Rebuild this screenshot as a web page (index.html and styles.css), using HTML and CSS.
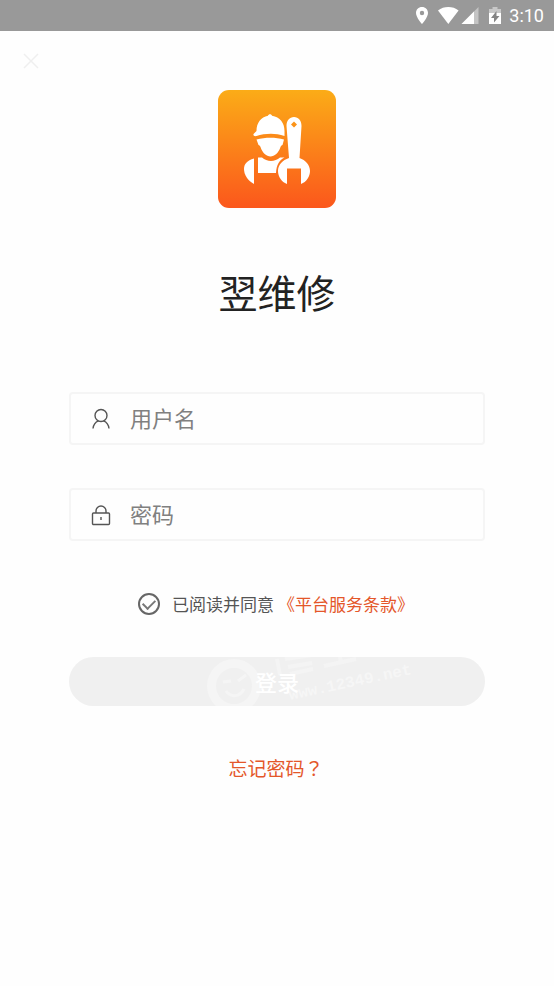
FILE: index.html
```html
<!DOCTYPE html>
<html lang="zh-CN">
<head>
<meta charset="utf-8">
<meta name="viewport" content="width=device-width, initial-scale=1">
<title>翌维修</title>
<link rel="stylesheet" href="styles.css">
</head>
<body>
<header class="status">
  <svg class="status-icons" width="88" height="20" viewBox="0 0 88 20" aria-hidden="true">
    <path fill="#fff" fill-rule="evenodd" d="M7 1C3.500 1 1 3.600 1 7c0 4.500 6 11 6 11s6-6.500 6-11c0-3.400-2.500-6-6-6zm0 3.800a2.200 2.200 0 1 1 0 4.400 2.200 2.200 0 0 1 0-4.400z"/>
    <path fill="#fff" d="M23 4.500C26 2 29.500 1 33.300 1s7.300 1 10.300 3.500L33.300 18z"/>
    <path fill="#c4c4c4" d="M63.500 1v17h-17z"/>
    <path fill="#fff" d="M59 5.500V18H46.500z"/>
    <path fill="#c8c8c8" d="M77.500 1h5v2H86v4H74V3h3.500z"/>
    <path fill="#fff" d="M74 7h12v11H74z"/>
    <path fill="#858585" d="M81.500 5L76 12h3v4.500L84.500 10h-3z"/>
  </svg>
  <time class="clock">3:10</time>
</header>
<main class="page">
  <button class="close" type="button" aria-label="关闭">
    <svg width="16" height="16" viewBox="0 0 16 16"><path d="M1 1l14 14M15 1L1 15" stroke="#efefef" stroke-width="1.500"/></svg>
  </button>
  <svg class="logo" width="118" height="118" viewBox="0 0 118 118" aria-hidden="true">
    <defs><linearGradient id="sunset" x1="0" y1="0" x2="0" y2="1"><stop offset="0" stop-color="#fbac17"/><stop offset="1" stop-color="#fb571c"/></linearGradient></defs>
    <rect width="118" height="118" rx="11" fill="url(#sunset)"/>
    <g fill="#fff">
      <path d="M35.500 44l3-3C38.500 33 43 27 50 25.800c.5-2 3.500-2 4 0C62 27 66.500 33 66.500 41v5c-10-3.500-20-2.500-28 0-2 .5-3.500-.5-3-2z"/>
      <path d="M38.500 49.500c9-2.500 19-2.500 27.500 0l-1.500 5.500c-1 0-1.500 1-2 2-2 6-6 9.500-10 9.500s-8-3.500-10-9.500c-.5-1-1-2-2-2z"/>
      <path d="M36 68.500V94C29.500 90.500 26 84.500 26 79c0-5 3-8.500 10-10.500z"/>
      <path d="M40 67.500h4c5 4.500 13 4.500 18 0l4.500 0c-5 2.500-8 7-8.500 15.500H40z"/>
      <path fill-rule="evenodd" d="M68.500 36c0-5.500 3-9 7.500-9s7.500 3.500 7.500 9L81.500 68c6 2 10.500 7 10.500 13 0 5.500-3.500 11-9 13V78.500H69V94c-5.500-2-9-7.500-9-13 0-6 4.500-11 11-13zm7.500-4.500L73 34.500l3 3 3-3z"/>
    </g>
  </svg>
  <h1 class="title">翌维修</h1>
  <form class="form">
    <label class="field">
      <svg width="20" height="22" viewBox="0 0 20 22" aria-label="用户名"><g fill="none" stroke="#555" stroke-width="1.400"><circle cx="10" cy="7.500" r="6"/><path d="M2 20.500c.4-4 2.500-6.500 5.500-7.700M18 20.500c-.4-4-2.500-6.500-5.500-7.700"/></g></svg>
      <input type="text" placeholder="用户名" autocomplete="username">
    </label>
    <label class="field">
      <svg width="20" height="22" viewBox="0 0 20 22" aria-label="密码"><g fill="none" stroke="#555" stroke-width="1.400"><rect x="1.500" y="9" width="17" height="11.500" rx="1"/><path d="M5 9V7a5 5 0 0 1 10 0v2M10 13v3"/></g></svg>
      <input type="password" placeholder="密码" autocomplete="current-password">
    </label>
    <div class="terms">
      <input class="tick" type="checkbox" id="agree" checked>
      <label for="agree">已阅读并同意</label>
      <a href="#terms">《平台服务条款》</a>
    </div>
    <button class="login" type="submit">
      <svg class="mark" width="220" height="49" viewBox="0 0 220 49" aria-hidden="true">
        <path fill="#f5f5f5" fill-rule="evenodd" d="M28 2a27 27 0 1 1 0 54 27 27 0 0 1 0-54zm0 9a18 18 0 1 0 0 36 18 18 0 0 0 0-36z"/>
        <path fill="none" stroke="#f5f5f5" stroke-width="3" d="M17 25l8-1M32 24l8-6M20 34c5 7 14 6 18-2"/>
        <g fill="#f6f6f6" transform="rotate(-12 84 43)"><text class="mark-url" x="84" y="43">www.12349.net</text></g>
        <path fill="none" stroke="#f4f4f4" stroke-width="4" d="M71 2l3 16M79 2l27-4M82 10l24-4M84 17l23-5M118 9l32-7M134 0l1 6"/>
      </svg>
      <span>登录</span>
    </button>
  </form>
  <a class="forgot" href="#forgot">忘记密码<span lang="zh-TW">？</span></a>
</main>
</body>
</html>
```
FILE: styles.css
```css
* { box-sizing: border-box; }
body {
  margin: 0;
  background: #fefefe;
  color: #222;
  font-family: "Noto Sans CJK SC", sans-serif;
}
a { color: #e4572a; text-decoration: none; }
.status {
  display: flex;
  align-items: center;
  justify-content: flex-end;
  gap: 6px;
  height: 31px;
  padding-right: 10px;
  background: #999;
}
.clock {
  color: #fff;
  font: 400 18px/30px Roboto, sans-serif;
}
.page {
  display: flex;
  flex-direction: column;
  align-items: center;
  padding: 22px 69px;
}
.close {
  align-self: flex-start;
  display: flex;
  margin-left: -46px;
  padding: 0;
  border: 0;
  background: none;
}
.logo { margin-top: 21px; }
.title {
  margin: 53px 0 0;
  font-size: 39px;
  line-height: 60px;
  font-weight: 400;
}
.form {
  display: flex;
  flex-direction: column;
  width: 100%;
  margin-top: 71px;
}
.field {
  display: flex;
  align-items: center;
  gap: 19px;
  height: 53px;
  margin-bottom: 43px;
  padding: 0 20px;
  border: 2px solid #f5f5f5;
  border-radius: 4px;
}
.field input {
  flex: 1;
  min-width: 0;
  padding: 0 0 4px;
  border: 0;
  outline: 0;
  background: none;
  font: 22px/32px "Noto Sans CJK SC", sans-serif;
}
.field input::placeholder { color: #808080; opacity: 1; }
.terms {
  display: flex;
  align-items: center;
  justify-content: center;
  height: 40px;
  padding-right: 2px;
  font-size: 17px;
  line-height: 24px;
  color: #555;
}
.terms a { margin-left: 4px; }
.tick {
  appearance: none;
  display: grid;
  place-items: center;
  width: 22px;
  height: 22px;
  margin: 0 12px 0 0;
  border: 2px solid #666;
  border-radius: 50%;
}
.tick:checked::before {
  content: "";
  width: 10px;
  height: 6px;
  margin-bottom: 3px;
  border: solid #777;
  border-width: 0 0 2px 2px;
  transform: rotate(-45deg);
}
.login {
  position: relative;
  height: 49px;
  margin-top: 33px;
  padding: 0 0 2px;
  overflow: hidden;
  border: 0;
  border-radius: 25px;
  background: #f0f0f0;
  color: #fff;
  font: 500 22px/32px "Noto Sans CJK SC", sans-serif;
}
.login span { position: relative; }
.mark {
  position: absolute;
  top: 0;
  left: 33%;
}
.mark-url { font: bold 16px "Liberation Mono", monospace; }
.forgot {
  margin-top: 48px;
  padding-right: 2px;
  font-size: 19px;
  line-height: 28px;
}
.forgot span { font-family: "Noto Sans CJK TC", sans-serif; }
```
